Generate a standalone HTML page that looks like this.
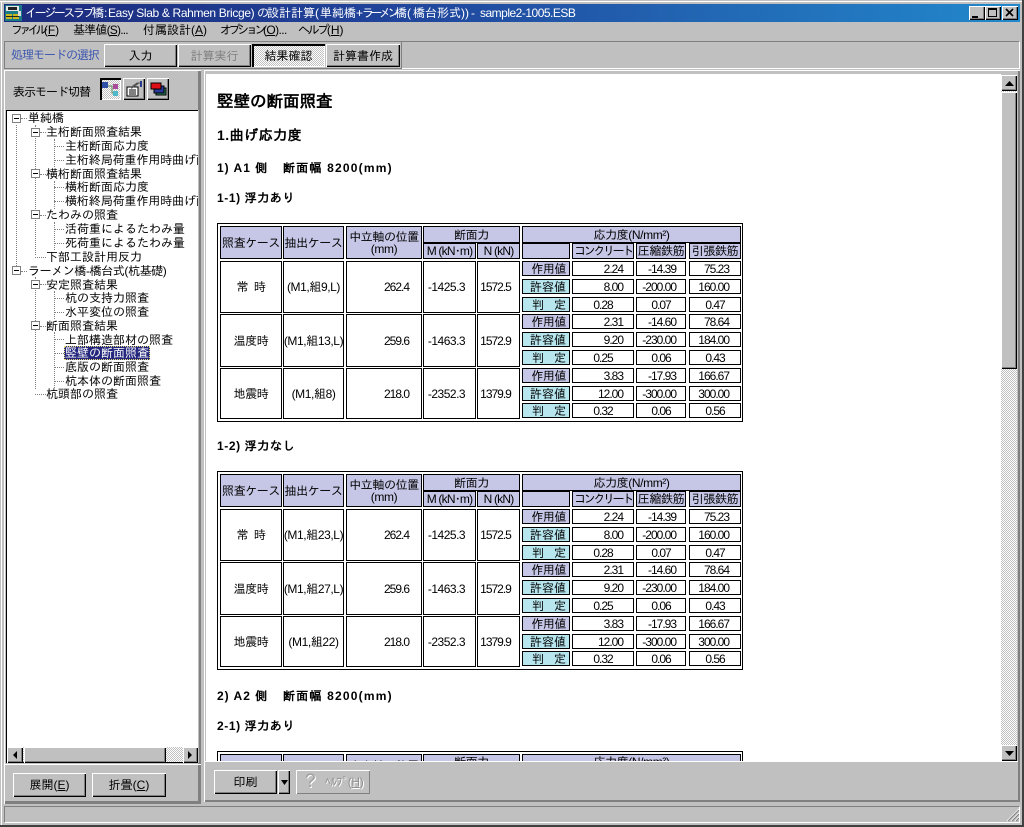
<!DOCTYPE html>
<html lang="ja"><head><meta charset="utf-8"><title>イージースラブ橋</title>
<style>
html,body{margin:0;padding:0;background:#c0c0c0;overflow:hidden;height:827px}
body{width:1024px;height:827px;position:relative;overflow:hidden;font:12px/14px "Liberation Sans","IPAGothic","Noto Sans CJK JP",sans-serif;color:#000}
div,span{position:absolute;white-space:nowrap;box-sizing:border-box}
.tb{left:4px;top:4px;width:1016px;height:18px;background:linear-gradient(90deg,#1c2a7c 0%,#20459c 40%,#2268b4 70%,#2288cc 100%);color:#fff;font-size:12px;line-height:19px;overflow:hidden}
.tb span{top:0}
.ws{width:16px;height:14px;top:6px;background:#c0c0c0;box-shadow:inset 1px 1px #fff,inset -1px -1px #000,inset -2px -2px #808080}
.m{top:23px;line-height:15px}
.b{background:#c0c0c0;box-shadow:inset 1px 1px #fff,inset -1px -1px #000,inset -2px -2px #808080;display:flex;align-items:center;justify-content:center;font-size:12px}
.dis{color:#808080}
.dth{background:repeating-conic-gradient(#fff 0 25%,#c0c0c0 0 50%) 0 0/2px 2px}
.prs{box-shadow:inset 2px 2px #000,inset -1px -1px #fff}
.n{line-height:14px;height:14px}
.ex{width:9px;height:9px;border:1px solid #808080;background:#fff}
.ex:after{content:"";position:absolute;left:1px;top:3px;width:5px;height:1px;background:#000}
.dv{width:0;border-left:1px dotted #808080}
.dh{height:0;border-top:1px dotted #808080}
.t{left:11px;width:526px;height:199px;border:1px solid #000;background:#fff;overflow:hidden}
.c{border:1px solid #000;display:flex;align-items:center;justify-content:center;background:#fff;letter-spacing:-1px;line-height:12px;overflow:hidden;text-align:center}
.r{justify-content:flex-end;padding-right:10px}
.hh{top:2px;height:33px}
.a{left:2px;width:62px}.bb{left:65px;width:61px}.cc{left:128px;width:76px}
.d{left:205px;width:53px}.e{left:259px;width:43px}
.l{left:304px;width:48px}.p{left:354px;width:62px}.q{left:418px;width:50px}.s{left:471px;width:52px}
.c.a,.c.bb{letter-spacing:-.4px}
.c.l{letter-spacing:0;justify-content:flex-end;padding-right:3px}
.cc.r{padding-right:12px}
.R1{top:37px;height:52px}.R2{top:90px;height:53px}.R3{top:144px;height:51px}
.c.d.R1,.c.d.R2,.c.d.R3{padding-right:6px;letter-spacing:-.5px}
.c.e.R1,.c.e.R2,.c.e.R3{padding-right:6px}
.k{height:15px}
.k1{top:37px}.k2{top:55px}.k3{top:73px}.k4{top:90px}.k5{top:108px}.k6{top:126px}.k7{top:144px}.k8{top:162px}.k9{top:179px}
.q.k1,.q.k2,.q.k4,.q.k5,.q.k7,.q.k8{justify-content:flex-end;padding-right:9px}
.s.k1,.s.k2,.s.k4,.s.k5,.s.k7,.s.k8{justify-content:flex-end;padding-right:11px}
.c.h{background:#c6c6e6;letter-spacing:-.4px}.c.y{background:#b8e6ee}
.c.ko{letter-spacing:-2.4px}
.c.m2{letter-spacing:-.8px}
.ttl{font-weight:bold;color:#000}
</style></head><body>
<div style="left:0;top:1px;width:1023px;height:1px;background:#fff"></div>
<div style="left:1px;top:1px;width:1px;height:824px;background:#fff"></div>
<div style="left:1022px;top:0;width:2px;height:827px;background:#404040"></div>
<div style="left:0;top:825px;width:1024px;height:2px;background:#404040"></div>

<div class="tb">
<span style="left:21px;letter-spacing:-2.4px">イージースラブ橋</span><span style="left:100px">:</span>
<span style="left:104px;letter-spacing:-.35px">Easy Slab &amp; Rahmen Bricge)</span>
<span style="left:253px">の</span><span style="left:263px">設計計算</span><span style="left:311px">(</span><span style="left:316px">単純橋</span><span style="left:352px">+</span>
<span style="left:358px;letter-spacing:-3.5px">ラーメン</span><span style="left:391px">橋</span><span style="left:403px">(</span><span style="left:409px">橋台形式</span><span style="left:457px">))</span>
<span style="left:467px">-</span><span style="left:476px;letter-spacing:-.5px">sample2-1005.ESB</span>
</div>
<svg style="position:absolute;left:5px;top:5px" width="17" height="16" viewBox="0 0 17 16"><rect width="17" height="16" fill="#1a7a86"/><rect x="1" y="1" width="13" height="5" fill="#e8e8e8"/><rect x="3" y="2" width="9" height="3" fill="#222"/><rect x="1" y="9" width="6" height="5" fill="#c8b820"/><rect x="8" y="9" width="6" height="5" fill="#c8b820"/><rect x="1" y="11" width="13" height="1" fill="#222"/><rect x="13" y="6" width="3" height="5" fill="#ddd"/></svg>
<div class="ws" style="left:969px"><span style="left:3px;top:10px;width:6px;height:2px;background:#000"></span></div>
<div class="ws" style="left:985px"><span style="left:3px;top:2px;width:9px;height:9px;border:1px solid #000;border-top-width:2px"></span></div>
<div class="ws" style="left:1002px"><svg style="position:absolute;left:3px;top:2px" width="9" height="9"><path d="M1 1L8 8M8 1L1 8" stroke="#000" stroke-width="1.6"/></svg></div>

<span class="m" style="left:11px;letter-spacing:-3.8px">ファイル<span style="position:static;letter-spacing:0">(<u>F</u>)</span></span>
<span class="m" style="left:73px;letter-spacing:-.8px">基準値(<u>S</u>)...</span>
<span class="m" style="left:143px">付属設計(<u>A</u>)</span>
<span class="m" style="left:220px;letter-spacing:-3.4px">オプション<span style="position:static;letter-spacing:-.6px">(<u>O</u>)...</span></span>
<span class="m" style="left:298px;letter-spacing:-2.4px">ヘルプ<span style="position:static;letter-spacing:0">(<u>H</u>)</span></span>

<div style="left:4px;top:41px;width:1016px;height:28px;border-top:1px solid #808080;border-bottom:1px solid #fff;border-right:1px solid #fff"></div>
<div style="left:4px;top:41px;width:398px;height:28px;border:1px solid #808080"></div>
<span style="left:11px;top:48px;color:#3b55b0;letter-spacing:-1px">処理モードの選択</span>
<div class="b" style="left:104px;top:44px;width:73px;height:23px">入力</div>
<div class="b dis" style="left:178px;top:44px;width:73px;height:23px">計算実行</div>
<div class="b dth prs" style="left:252px;top:44px;width:73px;height:23px">結果確認</div>
<div class="b" style="left:326px;top:44px;width:74px;height:23px">計算書作成</div>

<!-- left panel -->
<div style="left:4px;top:70px;width:197px;height:734px;box-shadow:inset 1px 1px #fff,inset -1px -1px #808080,inset -2px -2px #808080,inset -3px -3px #808080"></div>
<span style="left:13px;top:85px;letter-spacing:-1px">表示モード切替</span>
<div class="b dth prs" style="left:100px;top:78px;width:21px;height:22px"><svg width="17" height="16" viewBox="0 0 17 16"><path d="M5 5H10V12H13" stroke="#5a8a5a" fill="none"/><rect x="0" y="1" width="6" height="6" fill="#2f4fa8"/><rect x="11" y="3" width="5" height="5" fill="#a84a9a"/><rect x="11" y="10" width="5" height="5" fill="#50b8c8"/></svg></div>
<div class="b" style="left:123px;top:78px;width:22px;height:22px"><svg width="17" height="16" viewBox="0 0 17 16"><rect x="1" y="6" width="11" height="9" fill="#fff" stroke="#000"/><path d="M3 9H10M3 11H10M3 13H10" stroke="#000"/><path d="M5 7L12 2" stroke="#555" stroke-width="2"/><path d="M12 2H14" stroke="#555"/><rect x="14" y="0" width="2" height="6" fill="#2a3a8a"/></svg></div>
<div class="b" style="left:147px;top:78px;width:22px;height:22px"><svg width="17" height="14" viewBox="0 0 17 14"><rect x="6" y="6" width="10" height="7" fill="#2a8a60" stroke="#000"/><rect x="4" y="4" width="10" height="7" fill="#2a3a9a" stroke="#000"/><rect x="1" y="1" width="10" height="6" fill="#e01018" stroke="#000"/></svg></div>

<div style="left:6px;top:110px;width:193px;height:653px;background:#fff;border-top:1px solid #000;border-left:1px solid #000;overflow:hidden">
<div class="dv" style="left:9px;top:14px;height:147px"></div>
<div class="dv" style="left:28px;top:14px;height:130px"></div>
<div class="dv" style="left:28px;top:166px;height:112px"></div>
<div class="dv" style="left:47px;top:28px;height:28px"></div>
<div class="dv" style="left:47px;top:70px;height:28px"></div>
<div class="dv" style="left:47px;top:111px;height:28px"></div>
<div class="dv" style="left:47px;top:180px;height:28px"></div>
<div class="dv" style="left:47px;top:221px;height:56px"></div>
<div class="dh" style="left:14px;top:7px;width:6px"></div><div class="dh" style="left:33px;top:21px;width:6px"></div>
<div class="dh" style="left:47px;top:35px;width:10px"></div><div class="dh" style="left:47px;top:49px;width:10px"></div>
<div class="dh" style="left:33px;top:63px;width:6px"></div>
<div class="dh" style="left:47px;top:76px;width:10px"></div><div class="dh" style="left:47px;top:90px;width:10px"></div>
<div class="dh" style="left:33px;top:104px;width:6px"></div>
<div class="dh" style="left:47px;top:118px;width:10px"></div><div class="dh" style="left:47px;top:132px;width:10px"></div>
<div class="dh" style="left:28px;top:146px;width:11px"></div>
<div class="dh" style="left:14px;top:160px;width:6px"></div><div class="dh" style="left:33px;top:173px;width:6px"></div>
<div class="dh" style="left:47px;top:187px;width:10px"></div><div class="dh" style="left:47px;top:201px;width:10px"></div>
<div class="dh" style="left:33px;top:215px;width:6px"></div>
<div class="dh" style="left:47px;top:228px;width:10px"></div><div class="dh" style="left:47px;top:242px;width:10px"></div><div class="dh" style="left:47px;top:256px;width:10px"></div><div class="dh" style="left:47px;top:270px;width:10px"></div>
<div class="dh" style="left:28px;top:283px;width:11px"></div>
<div class="ex" style="left:5px;top:3px"></div><div class="ex" style="left:24px;top:17px"></div><div class="ex" style="left:24px;top:58px"></div><div class="ex" style="left:24px;top:99px"></div><div class="ex" style="left:5px;top:155px"></div><div class="ex" style="left:24px;top:169px"></div><div class="ex" style="left:24px;top:210px"></div>
<span class="n" style="left:21px;top:0">単純橋</span>
<span class="n" style="left:39px;top:14px">主桁断面照査結果</span>
<span class="n" style="left:58px;top:28px">主桁断面応力度</span>
<span class="n" style="left:58px;top:42px;letter-spacing:-.1px">主桁終局荷重作用時曲げ耐力照査</span>
<span class="n" style="left:39px;top:56px">横桁断面照査結果</span>
<span class="n" style="left:58px;top:69px">横桁断面応力度</span>
<span class="n" style="left:58px;top:83px;letter-spacing:-.1px">横桁終局荷重作用時曲げ耐力照査</span>
<span class="n" style="left:39px;top:97px">たわみの照査</span>
<span class="n" style="left:58px;top:111px">活荷重によるたわみ量</span>
<span class="n" style="left:58px;top:125px">死荷重によるたわみ量</span>
<span class="n" style="left:39px;top:139px">下部工設計用反力</span>
<span class="n" style="left:21px;top:153px;letter-spacing:-.4px">ラーメン橋-橋台式(杭基礎)</span>
<span class="n" style="left:39px;top:167px">安定照査結果</span>
<span class="n" style="left:58px;top:180px">杭の支持力照査</span>
<span class="n" style="left:58px;top:194px">水平変位の照査</span>
<span class="n" style="left:39px;top:208px">断面照査結果</span>
<span class="n" style="left:58px;top:222px">上部構造部材の照査</span>
<div style="left:57px;top:235px;width:86px;height:14px;background:#24277d;outline:1px dotted #e8e070;outline-offset:-1px"></div>
<span class="n" style="left:58px;top:235px;color:#fff">竪壁の断面照査</span>
<span class="n" style="left:58px;top:249px">底版の断面照査</span>
<span class="n" style="left:58px;top:263px">杭本体の断面照査</span>
<span class="n" style="left:39px;top:276px">杭頭部の照査</span>
</div>
<div style="left:198px;top:110px;width:1px;height:653px;background:#c0c0c0"></div>
<!-- h scrollbar -->
<div class="dth" style="left:7px;top:747px;width:191px;height:16px;border-bottom:1px solid #000"></div>
<div class="b" style="left:7px;top:747px;width:16px;height:16px"><svg width="5" height="8"><path d="M4 0V8L0 4Z"/></svg></div>
<div class="b" style="left:24px;top:747px;width:142px;height:16px"></div>
<div class="b" style="left:183px;top:747px;width:15px;height:16px"><svg width="5" height="8"><path d="M0 0V8L4 4Z"/></svg></div>
<div style="left:4px;top:764px;width:197px;height:1px;background:#fff"></div>
<div class="b" style="left:13px;top:773px;width:73px;height:24px">展開(<u>E</u>)</div>
<div class="b" style="left:92px;top:773px;width:74px;height:24px">折畳(<u>C</u>)</div>

<!-- content -->
<div style="left:204px;top:70px;width:816px;height:732px;box-shadow:inset 1px 1px #fff,inset -2px -2px #808080"></div>
<div style="left:205px;top:73px;width:796px;height:688px;background:#fff;border-left:1px solid #c0c0c0;border-top:1px solid #c0c0c0"></div>
<div style="left:206px;top:74px;width:795px;height:687px;overflow:hidden">
<span class="ttl" style="left:11px;top:19px;font-size:16.5px;line-height:18px">竪壁の断面照査</span>
<span class="ttl" style="left:11px;top:54px;font-size:14px;letter-spacing:.5px">1.曲げ応力度</span>
<span class="ttl" style="left:11px;top:87px;letter-spacing:1px">1) A1 側</span>
<span class="ttl" style="left:77px;top:87px;letter-spacing:1.2px">断面幅 8200(mm)</span>
<span class="ttl" style="left:11px;top:117px;letter-spacing:.6px">1-1) 浮力あり</span>

<div class="t" style="top:149px">
<div class="c h hh a">照査ケース</div><div class="c h hh bb">抽出ケース</div><div class="c h hh cc">中立軸の位置<br>(mm)</div>
<div class="c h d" style="top:2px;height:17px;width:97px">断面力</div>
<div class="c h d m2" style="top:19px;height:16px">M (kN･m)</div><div class="c h e m2" style="top:19px;height:16px">N (kN)</div>
<div class="c h" style="left:304px;top:2px;width:219px;height:17px">応力度(N/mm²)</div>
<div class="c h l" style="top:19px;height:16px"></div><div class="c h p ko" style="top:19px;height:16px">コンクリート</div><div class="c h q" style="top:19px;height:16px">圧縮鉄筋</div><div class="c h s" style="top:19px;height:16px">引張鉄筋</div>

<div class="c a R1">常&nbsp;&nbsp;時</div><div class="c bb R1">(M1,組9,L)</div><div class="c cc R1 r">262.4</div><div class="c d R1">-1425.3</div><div class="c e R1">1572.5</div>
<div class="c a R2">温度時</div><div class="c bb R2">(M1,組13,L)</div><div class="c cc R2 r">259.6</div><div class="c d R2">-1463.3</div><div class="c e R2">1572.9</div>
<div class="c a R3">地震時</div><div class="c bb R3">(M1,組8)</div><div class="c cc R3 r">218.0</div><div class="c d R3">-2352.3</div><div class="c e R3">1379.9</div>

<div class="c k h l k1">作用値</div><div class="c k p k1 r">2.24</div><div class="c k q k1">-14.39</div><div class="c k s k1">75.23</div>
<div class="c k y l k2">許容値</div><div class="c k p k2 r">8.00</div><div class="c k q k2">-200.00</div><div class="c k s k2">160.00</div>
<div class="c k y l k3">判&nbsp;&nbsp;&nbsp;定</div><div class="c k p k3">0.28</div><div class="c k q k3">0.07</div><div class="c k s k3">0.47</div>
<div class="c k h l k4">作用値</div><div class="c k p k4 r">2.31</div><div class="c k q k4">-14.60</div><div class="c k s k4">78.64</div>
<div class="c k y l k5">許容値</div><div class="c k p k5 r">9.20</div><div class="c k q k5">-230.00</div><div class="c k s k5">184.00</div>
<div class="c k y l k6">判&nbsp;&nbsp;&nbsp;定</div><div class="c k p k6">0.25</div><div class="c k q k6">0.06</div><div class="c k s k6">0.43</div>
<div class="c k h l k7">作用値</div><div class="c k p k7 r">3.83</div><div class="c k q k7">-17.93</div><div class="c k s k7">166.67</div>
<div class="c k y l k8">許容値</div><div class="c k p k8 r">12.00</div><div class="c k q k8">-300.00</div><div class="c k s k8">300.00</div>
<div class="c k y l k9">判&nbsp;&nbsp;&nbsp;定</div><div class="c k p k9">0.32</div><div class="c k q k9">0.06</div><div class="c k s k9">0.56</div>
</div>

<span class="ttl" style="left:11px;top:365px;letter-spacing:.6px">1-2) 浮力なし</span>

<div class="t" style="top:397px">
<div class="c h hh a">照査ケース</div><div class="c h hh bb">抽出ケース</div><div class="c h hh cc">中立軸の位置<br>(mm)</div>
<div class="c h d" style="top:2px;height:17px;width:97px">断面力</div>
<div class="c h d m2" style="top:19px;height:16px">M (kN･m)</div><div class="c h e m2" style="top:19px;height:16px">N (kN)</div>
<div class="c h" style="left:304px;top:2px;width:219px;height:17px">応力度(N/mm²)</div>
<div class="c h l" style="top:19px;height:16px"></div><div class="c h p ko" style="top:19px;height:16px">コンクリート</div><div class="c h q" style="top:19px;height:16px">圧縮鉄筋</div><div class="c h s" style="top:19px;height:16px">引張鉄筋</div>

<div class="c a R1">常&nbsp;&nbsp;時</div><div class="c bb R1">(M1,組23,L)</div><div class="c cc R1 r">262.4</div><div class="c d R1">-1425.3</div><div class="c e R1">1572.5</div>
<div class="c a R2">温度時</div><div class="c bb R2">(M1,組27,L)</div><div class="c cc R2 r">259.6</div><div class="c d R2">-1463.3</div><div class="c e R2">1572.9</div>
<div class="c a R3">地震時</div><div class="c bb R3">(M1,組22)</div><div class="c cc R3 r">218.0</div><div class="c d R3">-2352.3</div><div class="c e R3">1379.9</div>

<div class="c k h l k1">作用値</div><div class="c k p k1 r">2.24</div><div class="c k q k1">-14.39</div><div class="c k s k1">75.23</div>
<div class="c k y l k2">許容値</div><div class="c k p k2 r">8.00</div><div class="c k q k2">-200.00</div><div class="c k s k2">160.00</div>
<div class="c k y l k3">判&nbsp;&nbsp;&nbsp;定</div><div class="c k p k3">0.28</div><div class="c k q k3">0.07</div><div class="c k s k3">0.47</div>
<div class="c k h l k4">作用値</div><div class="c k p k4 r">2.31</div><div class="c k q k4">-14.60</div><div class="c k s k4">78.64</div>
<div class="c k y l k5">許容値</div><div class="c k p k5 r">9.20</div><div class="c k q k5">-230.00</div><div class="c k s k5">184.00</div>
<div class="c k y l k6">判&nbsp;&nbsp;&nbsp;定</div><div class="c k p k6">0.25</div><div class="c k q k6">0.06</div><div class="c k s k6">0.43</div>
<div class="c k h l k7">作用値</div><div class="c k p k7 r">3.83</div><div class="c k q k7">-17.93</div><div class="c k s k7">166.67</div>
<div class="c k y l k8">許容値</div><div class="c k p k8 r">12.00</div><div class="c k q k8">-300.00</div><div class="c k s k8">300.00</div>
<div class="c k y l k9">判&nbsp;&nbsp;&nbsp;定</div><div class="c k p k9">0.32</div><div class="c k q k9">0.06</div><div class="c k s k9">0.56</div>
</div>

<span class="ttl" style="left:11px;top:615px;letter-spacing:1px">2) A2 側</span>
<span class="ttl" style="left:77px;top:615px;letter-spacing:1.2px">断面幅 8200(mm)</span>
<span class="ttl" style="left:11px;top:645px;letter-spacing:.6px">2-1) 浮力あり</span>

<div class="t" style="top:677px;height:10px;border-bottom:0">
<div class="c h a" style="top:2px;height:8px;border-bottom:0"></div><div class="c h bb" style="top:2px;height:8px;border-bottom:0"></div>
<div class="c h cc" style="top:2px;height:8px;border-bottom:0;align-items:flex-start;padding-top:5px">中立軸の位置</div>
<div class="c h d" style="top:2px;height:8px;width:97px;border-bottom:0;align-items:flex-start;padding-top:1px">断面力</div>
<div class="c h" style="left:304px;top:2px;width:219px;height:8px;border-bottom:0;align-items:flex-start;padding-top:1px">応力度(N/mm²)</div>
</div>
</div>

<!-- v scrollbar -->
<div class="dth" style="left:1001px;top:75px;width:16px;height:686px"></div>
<div class="b" style="left:1001px;top:75px;width:16px;height:16px"><svg width="9" height="5"><path d="M0 5H9L4.5 0Z"/></svg></div>
<div class="b" style="left:1001px;top:92px;width:16px;height:277px"></div>
<div class="b" style="left:1001px;top:745px;width:16px;height:16px"><svg width="9" height="5"><path d="M0 0H9L4.5 5Z"/></svg></div>

<!-- bottom bar -->
<div style="left:205px;top:761px;width:813px;height:1px;background:#fff"></div>
<div class="b" style="left:214px;top:770px;width:63px;height:24px">印刷</div>
<div class="b" style="left:278px;top:770px;width:12px;height:24px"><svg width="7" height="5"><path d="M0 0H7L3.5 5Z"/></svg></div>
<div class="b dis" style="left:296px;top:770px;width:74px;height:24px;box-shadow:inset 1px 1px #fff,inset -1px -1px #808080;justify-content:flex-start">
<span style="left:9px;top:2px;font-size:19px;line-height:20px;color:#a0a0a0;text-shadow:1px 1px #fff">?</span>
<span style="left:29px;top:5px;font-size:12px;color:#909090;text-shadow:1px 1px #fff;letter-spacing:-.4px">ﾍﾙﾌﾟ(<u>H</u>)</span></div>

<!-- status -->
<div style="left:4px;top:806px;width:1016px;height:17px;border-top:1px solid #808080;border-left:1px solid #808080;border-bottom:1px solid #fff;border-right:1px solid #fff"></div>
<svg style="position:absolute;left:1006px;top:808px" width="14" height="14"><path d="M13 1L1 13M13 5L5 13M13 9L9 13" stroke="#fff" stroke-width="1"/><path d="M13 2L2 13M13 6L6 13M13 10L10 13" stroke="#808080" stroke-width="1"/></svg>
</body></html>
